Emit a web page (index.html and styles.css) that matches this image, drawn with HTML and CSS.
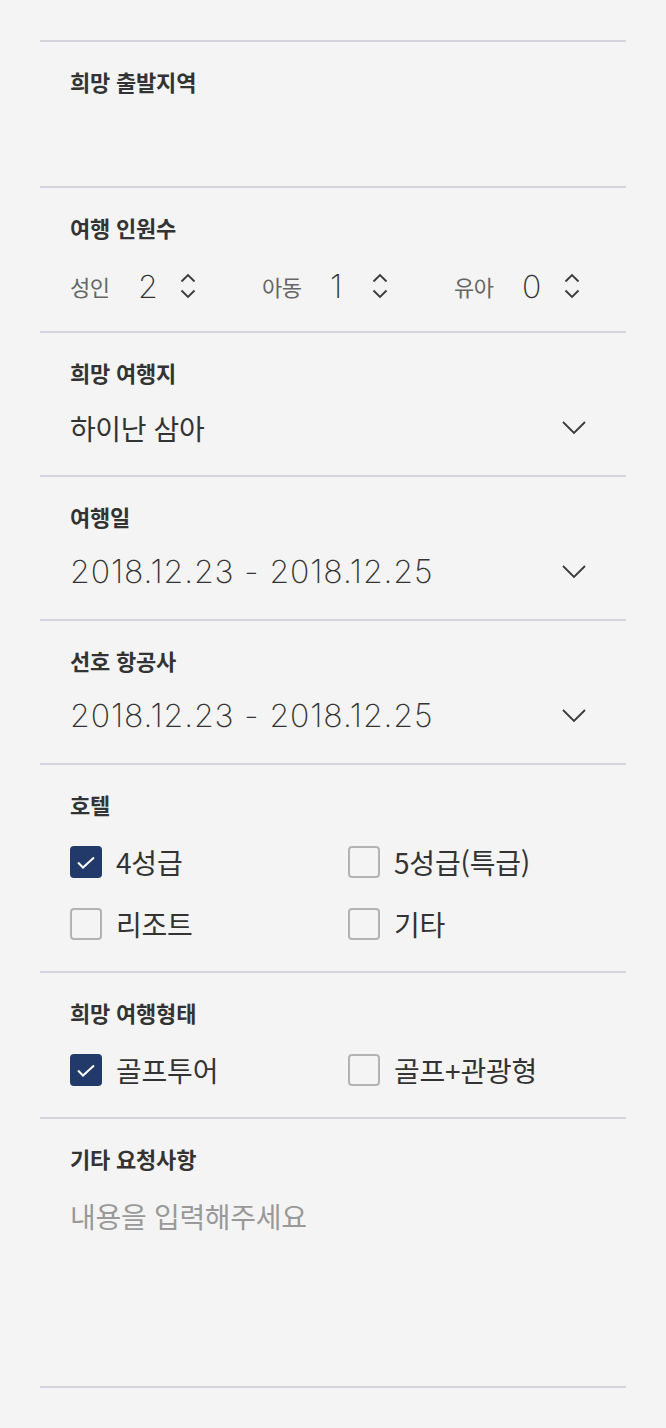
FILE: index.html
```html
<!DOCTYPE html>
<html lang="ko">
<head>
<meta charset="utf-8">
<title>여행 문의</title>
<link rel="stylesheet" href="styles.css">
</head>
<body>
<div class="form">
  <section class="field field-first">
    <h3 class="label">희망 출발지역</h3>
  </section>

  <section class="field field-counts">
    <h3 class="label">여행 인원수</h3>
    <div class="counts">
      <div class="count">
        <span class="count-label">성인</span>
        <span class="count-num">2</span>
        <svg class="spinner" width="16" height="26" viewBox="0 0 16 26"><path d="M1.5 8.5 L8 2 L14.5 8.5 M1.5 17.5 L8 24 L14.5 17.5" fill="none" stroke="#3a3a3a" stroke-width="1.8"/></svg>
      </div>
      <div class="count">
        <span class="count-label">아동</span>
        <span class="count-num">1</span>
        <svg class="spinner" width="16" height="26" viewBox="0 0 16 26"><path d="M1.5 8.5 L8 2 L14.5 8.5 M1.5 17.5 L8 24 L14.5 17.5" fill="none" stroke="#3a3a3a" stroke-width="1.8"/></svg>
      </div>
      <div class="count">
        <span class="count-label">유아</span>
        <span class="count-num">0</span>
        <svg class="spinner" width="16" height="26" viewBox="0 0 16 26"><path d="M1.5 8.5 L8 2 L14.5 8.5 M1.5 17.5 L8 24 L14.5 17.5" fill="none" stroke="#3a3a3a" stroke-width="1.8"/></svg>
      </div>
    </div>
  </section>

  <section class="field">
    <h3 class="label">희망 여행지</h3>
    <div class="select">
      <span class="select-value">하이난 삼아</span>
      <svg class="chevron" width="24" height="14" viewBox="0 0 24 14"><path d="M1 1 L12 12 L23 1" fill="none" stroke="#3a3a3a" stroke-width="1.8"/></svg>
    </div>
  </section>

  <section class="field">
    <h3 class="label">여행일</h3>
    <div class="select">
      <span class="select-value num">2018.12.23 - 2018.12.25</span>
      <svg class="chevron" width="24" height="14" viewBox="0 0 24 14"><path d="M1 1 L12 12 L23 1" fill="none" stroke="#3a3a3a" stroke-width="1.8"/></svg>
    </div>
  </section>

  <section class="field">
    <h3 class="label">선호 항공사</h3>
    <div class="select">
      <span class="select-value num">2018.12.23 - 2018.12.25</span>
      <svg class="chevron" width="24" height="14" viewBox="0 0 24 14"><path d="M1 1 L12 12 L23 1" fill="none" stroke="#3a3a3a" stroke-width="1.8"/></svg>
    </div>
  </section>

  <section class="field field-checks">
    <h3 class="label">호텔</h3>
    <div class="checks">
      <label class="check"><span class="box box-on"><svg width="32" height="32" viewBox="0 0 32 32"><path d="M8 16.5 L13 21.5 L24 11.5" fill="none" stroke="#fff" stroke-width="2"/></svg></span><span class="check-text">4성급</span></label>
      <label class="check"><span class="box"></span><span class="check-text">5성급(특급)</span></label>
      <label class="check"><span class="box"></span><span class="check-text">리조트</span></label>
      <label class="check"><span class="box"></span><span class="check-text">기타</span></label>
    </div>
  </section>

  <section class="field field-checks">
    <h3 class="label">희망 여행형태</h3>
    <div class="checks">
      <label class="check"><span class="box box-on"><svg width="32" height="32" viewBox="0 0 32 32"><path d="M8 16.5 L13 21.5 L24 11.5" fill="none" stroke="#fff" stroke-width="2"/></svg></span><span class="check-text">골프투어</span></label>
      <label class="check"><span class="box"></span><span class="check-text">골프+관광형</span></label>
    </div>
  </section>

  <section class="field field-last">
    <h3 class="label">기타 요청사항</h3>
    <textarea class="memo" placeholder="내용을 입력해주세요"></textarea>
  </section>
</div>
</body>
</html>
```

FILE: styles.css
```css
html, body {
  margin: 0;
  padding: 0;
  background: #f4f4f4;
}

body {
  font-family: "Noto Sans CJK KR", "Noto Sans", sans-serif;
  color: #333;
}

.form {
  padding: 40px 40px 0;
}

.field {
  border-top: 2px solid #d3d5da;
  padding: 22px 40px 25px 30px;
}

.field-first {
  padding-bottom: 88px;
}

.field-counts {
  padding-bottom: 23px;
}

.field-last {
  padding-bottom: 0;
  border-bottom: 2px solid #d3d5da;
}

.label {
  margin: 0;
  font-size: 22px;
  line-height: 34px;
  font-weight: 700;
  color: #333;
  letter-spacing: -0.2px;
}

/* counts */
.counts {
  display: flex;
  margin-top: 20px;
  height: 44px;
}

.count {
  display: flex;
  align-items: center;
  width: 192px;
  flex: none;
}

.count:last-child {
  width: auto;
}

.count-label {
  width: 68px;
  font-size: 22px;
  color: #666;
  letter-spacing: -0.5px;
}

.count-num {
  width: 42px;
  font-family: "Inter", "Noto Sans", sans-serif;
  font-weight: 200;
  font-size: 32px;
  color: #333;
}

.spinner {
  display: block;
}

/* select */
.select {
  display: flex;
  align-items: center;
  justify-content: space-between;
  height: 44px;
  margin-top: 17px;
}

.select-value {
  font-size: 28px;
  line-height: 44px;
  color: #333;
  letter-spacing: -0.4px;
}

.select-value.num {
  font-family: "Inter", "Noto Sans", sans-serif;
  font-weight: 200;
  font-size: 32px;
  letter-spacing: 0.9px;
}

.chevron {
  display: block;
}

/* checkboxes */
.checks {
  display: grid;
  grid-template-columns: 278px 1fr;
  row-gap: 18px;
  margin-top: 19px;
}

.check {
  display: flex;
  align-items: center;
  height: 44px;
}

.box {
  box-sizing: border-box;
  width: 32px;
  height: 32px;
  border: 2px solid #b3b3b3;
  border-radius: 4px;
  flex: none;
}

.box-on {
  border: 0;
  background: #223a69;
}

.box svg {
  display: block;
}

.check-text {
  margin-left: 14px;
  font-size: 28px;
  color: #333;
  letter-spacing: -0.2px;
}

/* textarea */
.memo {
  display: block;
  box-sizing: border-box;
  width: 100%;
  height: 192px;
  margin: 19px 0 0;
  padding: 0;
  border: 0;
  outline: none;
  resize: none;
  background: transparent;
  font-family: "Noto Sans CJK KR", "Noto Sans", sans-serif;
  font-size: 28px;
  line-height: 44px;
  color: #333;
  letter-spacing: -0.3px;
}

.memo::placeholder {
  color: #999;
}
```
